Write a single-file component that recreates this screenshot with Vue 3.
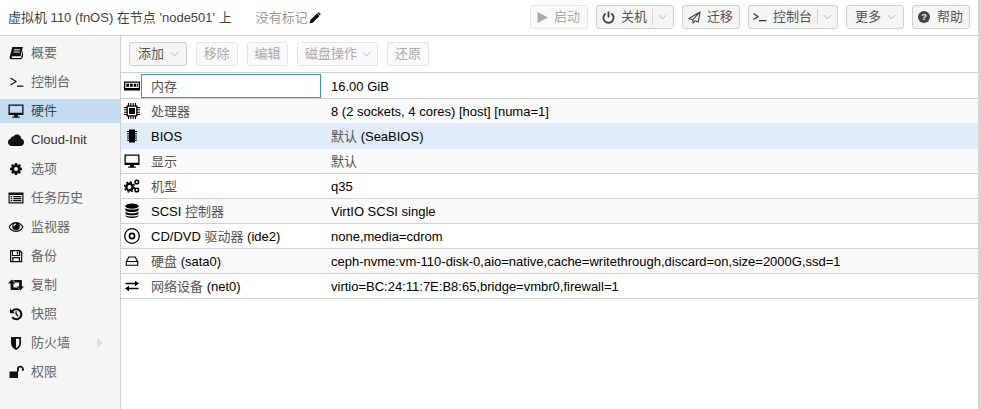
<script setup>
const nav = [
  { t: '概要', i: 'book' }, { t: '控制台', i: 'term' }, { t: '硬件', i: 'desktop', active: true },
  { t: 'Cloud-Init', i: 'cloud', dark: true }, { t: '选项', i: 'gear' }, { t: '任务历史', i: 'list' },
  { t: '监视器', i: 'eye' }, { t: '备份', i: 'save' }, { t: '复制', i: 'retweet' },
  { t: '快照', i: 'history' }, { t: '防火墙', i: 'shield', arrow: true }, { t: '权限', i: 'unlock' },
]
const rows = [
  { k: '内存', v: '16.00 GiB', i: 'ram', focus: true },
  { k: '处理器', v: '8 (2 sockets, 4 cores) [host] [numa=1]', i: 'cpu', alt: true, pre: true },
  { k: 'BIOS', v: '默认 (SeaBIOS)', i: 'chip', sel: true },
  { k: '显示', v: '默认', i: 'desktop', alt: true },
  { k: '机型', v: 'q35', i: 'gears' },
  { k: 'SCSI 控制器', v: 'VirtIO SCSI single', i: 'db', alt: true },
  { k: 'CD/DVD 驱动器 (ide2)', v: 'none,media=cdrom', i: 'disc' },
  { k: '硬盘 (sata0)', v: 'ceph-nvme:vm-110-disk-0,aio=native,cache=writethrough,discard=on,size=2000G,ssd=1', i: 'hdd', alt: true },
  { k: '网络设备 (net0)', v: 'virtio=BC:24:11:7E:B8:65,bridge=vmbr0,firewall=1', i: 'exchange' },
]
const parts = (s) => s.split(/([\u4e00-\u9fff]+)/).filter(Boolean).map((t) => ({ t, cj: /[\u4e00-\u9fff]/.test(t) }))
const paths = {
  book: 'M1.5 12.6 L4.3 2 H14.8 L12.6 11.2 H4.6 C3.4 11.2 3.4 13 4.6 13 H13 L15 5 V11.5 L13.4 14.2 H3.8 C2.2 14.2 1.5 13.5 1.5 12.6Z M6 4.2 V5.2 H12 V4.2Z M5.6 6.4 V7.4 H11.6 V6.4Z',
  desktop: 'M0.5 1.5 H15.5 V12 H9.8 V13.5 H11.8 V14.8 H4.2 V13.5 H6.2 V12 H0.5Z M1.8 2.8 V9.8 H14.2 V2.8Z',
  cloud: 'M4 14 C1.5 14 0 12.3 0 10.3 C0 8.5 1 7.2 2.6 6.8 C2.7 5.2 4 4.2 5.3 4.5 C6.2 3 7.5 2.4 9 2.4 C11.5 2.4 13.2 4.3 13.2 6.6 C14.8 7 16 8.5 16 10.3 C16 12.4 14.4 14 12.2 14Z',
  list: 'M0.5 2.5 H15.5 V13.5 H0.5Z M1.7 5 V12.3 H14.3 V5Z M2.6 6 H4.2 V7.2 H2.6Z M5.2 6 H13.4 V7.2 H5.2Z M2.6 8 H4.2 V9.2 H2.6Z M5.2 8 H13.4 V9.2 H5.2Z M2.6 10 H4.2 V11.2 H2.6Z M5.2 10 H13.4 V11.2 H5.2Z',
  eye: 'M0.5 8 C2.4 4.6 5 3 8 3 C11 3 13.6 4.6 15.5 8 C13.6 11.4 11 13 8 13 C5 13 2.4 11.4 0.5 8Z M1.9 8 C3.4 10.5 5.5 11.8 8 11.8 C10.5 11.8 12.6 10.5 14.1 8 C13.3 6.7 12.3 5.6 11.2 4.9 C11.6 5.6 11.9 6.5 11.9 7.4 C11.9 9.6 10.2 11.3 8 11.3 C5.8 11.3 4.1 9.6 4.1 7.4 C4.1 6.5 4.4 5.6 4.8 4.9 C3.7 5.6 2.7 6.7 1.9 8Z M8 4.6 A2.7 2.7 0 0 0 5.3 7.3 H6.3 A1.7 1.7 0 0 1 8 5.6Z',
  save: 'M2 2 H12 L14.3 4.3 V14.3 H2Z M5 3.2 V7 H11 V3.2Z M8.8 3.7 H10.1 V6.4 H8.8Z M3.2 3.2 V13.1 H4.2 V9 H12 V13.1 H13.1 V4.9 L12.2 4 V8 H3.9 V3.2Z M5.4 10.2 V13.1 H10.8 V10.2Z',
  retweet: 'M3.8 2.5 L7.6 6.6 H5.4 V10.4 H10.2 L12.4 13 H3.6 C2.9 13 2.6 12.6 2.6 12 V6.6 H0 Z M5.2 3 H13 C13.6 3 13.9 3.4 13.9 4 V9.4 H16 L12.4 13.5 L8.6 9.4 H11.1 V5.6 H7.4Z',
  history: 'M2 2.4 L3.8 4.2 C5 2.9 6.4 2.2 8.2 2.2 C11.6 2.2 14.4 4.8 14.4 8.2 C14.4 11.6 11.6 14.2 8.2 14.2 C6.4 14.2 4.6 13.4 3.5 12 L5 10.6 C5.8 11.6 7 12.2 8.2 12.2 C10.4 12.2 12.3 10.4 12.3 8.2 C12.3 6 10.4 4.2 8.2 4.2 C7 4.2 6.1 4.6 5.3 5.7 L6.9 7.3 H2Z M7.4 5.2 H8.8 V7.8 L10.6 9.6 L9.7 10.6 L7.4 8.3Z',
  shield: 'M3 2 H13 V8.4 C13 11.4 10.3 13.6 8 15 C5.7 13.6 3 11.4 3 8.4Z M8 3.7 V12.9 C9.6 11.9 11.3 10.4 11.3 8.4 V3.7Z',
  unlock: 'M1.5 7.5 H10 V14 H1.5Z M9 7.5 V5 C9 3 10.6 1.8 12.4 1.8 C14.2 1.8 15.8 3.1 15.8 5 V6.8 H14 V5 C14 4.1 13.3 3.5 12.4 3.5 C11.5 3.5 10.8 4.1 10.8 5 V7.5Z',
  chip: 'M5 1.5 H11 V14.5 H5Z M3 3 H5 V4 H3Z M3 5.2 H5 V6.2 H3Z M3 7.4 H5 V8.4 H3Z M3 9.6 H5 V10.6 H3Z M3 11.8 H5 V12.8 H3Z M11 3 H13 V4 H11Z M11 5.2 H13 V6.2 H11Z M11 7.4 H13 V8.4 H11Z M11 9.6 H13 V10.6 H11Z M11 11.8 H13 V12.8 H11Z',
  hdd: 'M4.5 3.5 H11.5 L14.3 8.5 V12.8 H1.7 V8.5Z M5.2 4.6 L3.3 8 H12.7 L10.8 4.6Z M2.8 9.1 V11.7 H13.2 V9.1Z',
  exchange: 'M1.5 4.7 H11 V2.7 L15 5.5 L11 8.3 V6.3 H1.5Z M14.5 9.7 V11.3 H5 V13.3 L1 10.5 L5 7.7 V9.7Z',
}
</script>

<template>
  <div class="page">
    <header class="head">
      <div class="title">虚拟机 110 (fnOS) 在节点 'node501' 上</div>
      <div class="tags">没有标记<svg class="pencil" viewBox="0 0 12 12"><path d="M0.5 11.5 L1.2 8.3 L8 1.5 L10.5 4 L3.7 10.8Z M8.7 0.8 C9.2 0.3 9.8 0.3 10.2 0.7 L11.3 1.8 C11.7 2.2 11.7 2.8 11.2 3.3 L10.9 3.6 L8.4 1.1Z" /></svg></div>
      <div class="actions">
        <button class="btn off b-start"><svg class="ti play" viewBox="0 0 11 11"><path d="M0.5 0 L11 5.5 L0.5 11Z" fill="#aaa" /></svg><span>启动</span></button>
        <button class="btn b-stop"><svg class="ti" viewBox="0 0 14 14"><path d="M4 2.6 A5.5 5.5 0 1 0 10 2.6 M7 0.5 V7" fill="none" stroke="#444" stroke-width="2" /></svg><span>关机</span><i class="sep"></i><svg class="chev" viewBox="0 0 10 6"><path d="M1 1 L5 5 L9 1" /></svg></button>
        <button class="btn b-mig"><svg class="ti" viewBox="0 0 14 14"><path d="M13 1 L1 8 L5 9.5 L5.5 13 L7.5 10.5 L11 12 Z M13 1 L5 9.5" fill="none" stroke="#444" stroke-width="1.2" stroke-linejoin="round" /></svg><span>迁移</span></button>
        <button class="btn b-con"><svg class="ti" viewBox="0 0 14 10"><path d="M0.5 1.5 L5 4.5 L0.5 7.5 M6 8.7 H13.5" fill="none" stroke="#333" stroke-width="1.2" /></svg><span>控制台</span><i class="sep"></i><svg class="chev" viewBox="0 0 10 6"><path d="M1 1 L5 5 L9 1" /></svg></button>
        <button class="btn b-more"><span>更多</span><svg class="chev wide" viewBox="0 0 10 6"><path d="M1 1 L5 5 L9 1" /></svg></button>
        <button class="btn b-help"><svg class="ti help" viewBox="0 0 14 14"><circle cx="7" cy="7" r="7" fill="#444" /><text x="7" y="11" class="q">?</text></svg><span>帮助</span></button>
      </div>
    </header>
    <div class="body">
      <nav class="side">
        <div v-for="n in nav" :key="n.t" class="item" :class="{ active: n.active }">
          <span class="ic">
            <svg v-if="n.i === 'term'" class="term" viewBox="0 0 14 10"><path d="M0.5 1 L6 4.5 L0.5 8 M7 9.2 H13.5" fill="none" stroke="#111" stroke-width="1.2" /></svg>
            <svg v-else-if="n.i === 'gear'" class="svg" viewBox="0 0 16 16"><circle cx="8" cy="8" r="3.4" fill="none" stroke="#111" stroke-width="2.8" /><path d="M8 2 V14 M2 8 H14 M3.8 3.8 L12.2 12.2 M12.2 3.8 L3.8 12.2" stroke="#111" stroke-width="2.4" stroke-dasharray="2.2 7.6 2.2" fill="none" /></svg>
            <svg v-else class="svg" viewBox="0 0 16 16"><path :d="paths[n.i]" fill="#111" fill-rule="evenodd" /></svg>
          </span>
          <span class="lbl" :class="{ dark: n.dark }">{{ n.t }}</span>
          <svg v-if="n.arrow" class="sub" viewBox="0 0 6 10"><path d="M0 0 L6 5 L0 10Z" fill="#ddd" /></svg>
        </div>
      </nav>
      <main class="main">
        <div class="tbar">
          <button class="btn tb b-add"><span>添加</span><svg class="chev wide" viewBox="0 0 10 6"><path d="M1 1 L5 5 L9 1" /></svg></button>
          <button class="btn tb off"><span>移除</span></button>
          <button class="btn tb off"><span>编辑</span></button>
          <button class="btn tb off b-disk"><span>磁盘操作</span><svg class="chev wide" viewBox="0 0 10 6"><path d="M1 1 L5 5 L9 1" /></svg></button>
          <button class="btn tb off"><span>还原</span></button>
        </div>
        <div class="grid">
          <div v-for="r in rows" :key="r.k" class="row" :class="{ alt: r.alt, sel: r.sel, pre: r.pre }">
            <span class="ric">
              <svg v-if="r.i === 'ram'" class="rsvg" viewBox="0 0 16 16"><path d="M0 3.5 H16 V12.5 H0Z M1.3 4.8 V10 H14.7 V4.8Z M2.3 5.8 H5 V8.8 H2.3Z M6 5.8 H8.7 V8.8 H6Z M9.7 5.8 H12.2 V8.8 H9.7Z M12.9 5.8 H13.8 V8.8 H12.9Z" fill="#000" fill-rule="evenodd" /></svg>
              <svg v-else-if="r.i === 'cpu'" class="rsvg" viewBox="0 0 16 16"><path d="M2.5 2.5 H13.5 V13.5 H2.5Z M3.8 3.8 V12.2 H12.2 V3.8Z M5 5 H11 V11 H5Z" fill="#000" fill-rule="evenodd" /><path d="M0 4.5 H3 M0 6.8 H3 M0 9.2 H3 M0 11.5 H3 M13 4.5 H16 M13 6.8 H16 M13 9.2 H16 M13 11.5 H16 M4.5 0 V3 M6.8 0 V3 M9.2 0 V3 M11.5 0 V3 M4.5 13 V16 M6.8 13 V16 M9.2 13 V16 M11.5 13 V16" stroke="#000" stroke-width="1.1" /></svg>
              <svg v-else-if="r.i === 'gears'" class="rsvg" viewBox="0 0 16 16"><circle cx="5.5" cy="9" r="3.2" fill="none" stroke="#000" stroke-width="2.4" /><circle cx="5.5" cy="9" r="5" fill="none" stroke="#000" stroke-width="1.4" stroke-dasharray="2 1.9" /><circle cx="12.8" cy="4" r="1.8" fill="none" stroke="#000" stroke-width="1.5" /><circle cx="12.8" cy="12" r="1.8" fill="none" stroke="#000" stroke-width="1.5" /></svg>
              <svg v-else-if="r.i === 'db'" class="rsvg" viewBox="0 0 16 16"><ellipse cx="8" cy="3.2" rx="6.5" ry="2.6" fill="#000" /><path d="M1.5 5 C3 7 13 7 14.5 5 V7.4 C13 9.4 3 9.4 1.5 7.4Z M1.5 8.7 C3 10.7 13 10.7 14.5 8.7 V10.8 C13 12.8 3 12.8 1.5 10.8Z M1.5 12 C3 14 13 14 14.5 12 V13 C13 15.6 3 15.6 1.5 13Z" fill="#000" /></svg>
              <svg v-else-if="r.i === 'disc'" class="rsvg" viewBox="0 0 16 16"><circle cx="8" cy="8" r="7.3" fill="none" stroke="#000" stroke-width="1.3" /><circle cx="8" cy="8" r="2.6" fill="none" stroke="#000" stroke-width="1.6" /></svg>
              <svg v-else class="rsvg" viewBox="0 0 16 16"><path :d="paths[r.i]" fill="#000" fill-rule="evenodd" /></svg>
            </span>
            <span class="key" :class="{ focus: r.focus }"><span v-for="(p, i) in parts(r.k)" :key="i" :class="{ cj: p.cj }">{{ p.t }}</span></span>
            <span class="val"><span v-for="(p, i) in parts(r.v)" :key="i" :class="{ cj: p.cj }">{{ p.t }}</span></span>
          </div>
        </div>
      </main>
    </div>
  </div>
</template>

<style>
html, body { margin: 0; padding: 0; background: #fff; }
</style>

<style scoped>
.page { width: 978px; height: 409px; display: flex; flex-direction: column; background: #fff; color: #000; border-right: 3px solid #d6d6d6; font: 13px/16px "Liberation Sans", "Noto Sans CJK SC", sans-serif; overflow: hidden; }
.head { height: 36px; flex: none; box-sizing: border-box; display: flex; align-items: center; border-bottom: 1px solid #cfcfcf; padding: 0 8px; color: #444; }
.title { color: #444; }
.tags { margin-left: 24px; color: #999; display: flex; align-items: center; gap: 1px; }
.pencil { width: 12px; height: 12px; fill: #111; }
.actions { margin-left: auto; display: flex; gap: 8px; align-self: flex-start; margin-top: 5px; }
.btn { height: 24px; box-sizing: border-box; border: 1px solid #cfcfcf; border-radius: 3px; background: #f5f5f5; color: #555; font: inherit; display: flex; align-items: center; padding: 0; white-space: nowrap; }
.btn.off { background: #fafafa; color: #aaa; border-color: #e6e6e6; }
.ti { width: 13px; height: 13px; margin: 0 6px 0 5px; flex: none; }
.ti.play { width: 11px; height: 11px; margin: 0 6px 0 6px; }
.ti.help { width: 12px; height: 12px; margin: 0 7px 0 5px; }
.q { font: bold 11px "Liberation Sans", sans-serif; fill: #f5f5f5; text-anchor: middle; }
.sep { width: 1px; height: 16px; background: #d5d5d5; margin: 0 5px 0 5px; flex: none; }
.chev { width: 9px; height: 6px; fill: none; stroke: #aaa; stroke-width: 1; flex: none; }
.chev.wide { margin-left: 6px; }
.b-start { width: 58px; }
.b-stop { width: 78px; }
.b-mig { width: 58px; }
.b-con { width: 90px; }
.b-con .ti { margin-left: 4px; width: 14px; height: 10px; }
.b-more { width: 58px; padding-left: 8px; }
.b-help { width: 58px; }
.body { flex: 1; display: flex; min-height: 0; }
.side { width: 121px; flex: none; box-sizing: border-box; background: #f5f5f5; padding-top: 5px; border-right: 1px solid #cfcfcf; }
.item { height: 24px; display: flex; align-items: center; position: relative; margin-bottom: 5px; }
.item.active { background: #c2ddf2; }
.ic { width: 16px; margin-left: 8px; display: flex; align-items: center; justify-content: center; flex: none; }
.svg { width: 16px; height: 16px; }
.term { width: 14px; height: 10px; margin-left: 1px; }
.lbl { margin-left: 7px; color: #666; }
.lbl.dark { color: #333; }
.active .lbl { color: #444; }
.sub { position: absolute; left: 97px; top: 7px; width: 6px; height: 10px; }
.main { flex: 1; min-width: 0; display: flex; flex-direction: column; }
.tbar { height: 37px; flex: none; box-sizing: border-box; display: flex; align-items: center; gap: 9px; padding: 0 8px; border-bottom: 1px solid #cfcfcf; }
.tb { padding: 0 6.85px; height: 24px; }
.b-add { padding-left: 8px; }
.b-disk { width: 81px; }
.b-disk .chev { margin-left: 5px; }
.grid { padding-top: 1px; }
.row { height: 25px; box-sizing: border-box; display: flex; align-items: center; border-bottom: 1px solid #d0d0d0; color: #000; }
.row.alt { background: #fafafa; }
.row.pre { border-bottom-color: #e0ecf7; }
.row.sel { background: #e0ecf7; border-bottom-color: #e0ecf7; }
.ric { width: 20px; box-sizing: border-box; padding-left: 3px; display: flex; flex: none; }
.rsvg { width: 16px; height: 16px; }
.key { width: 180px; box-sizing: border-box; padding: 1px 0 0 10px; flex: none; }
.key.focus { height: 24px; line-height: 23px; padding: 0 0 0 9px; border: 1px solid #3892d3; background: #fff; }
.val { margin-left: 10px; padding-top: 1px; }
.cj { color: #555; }
</style>
